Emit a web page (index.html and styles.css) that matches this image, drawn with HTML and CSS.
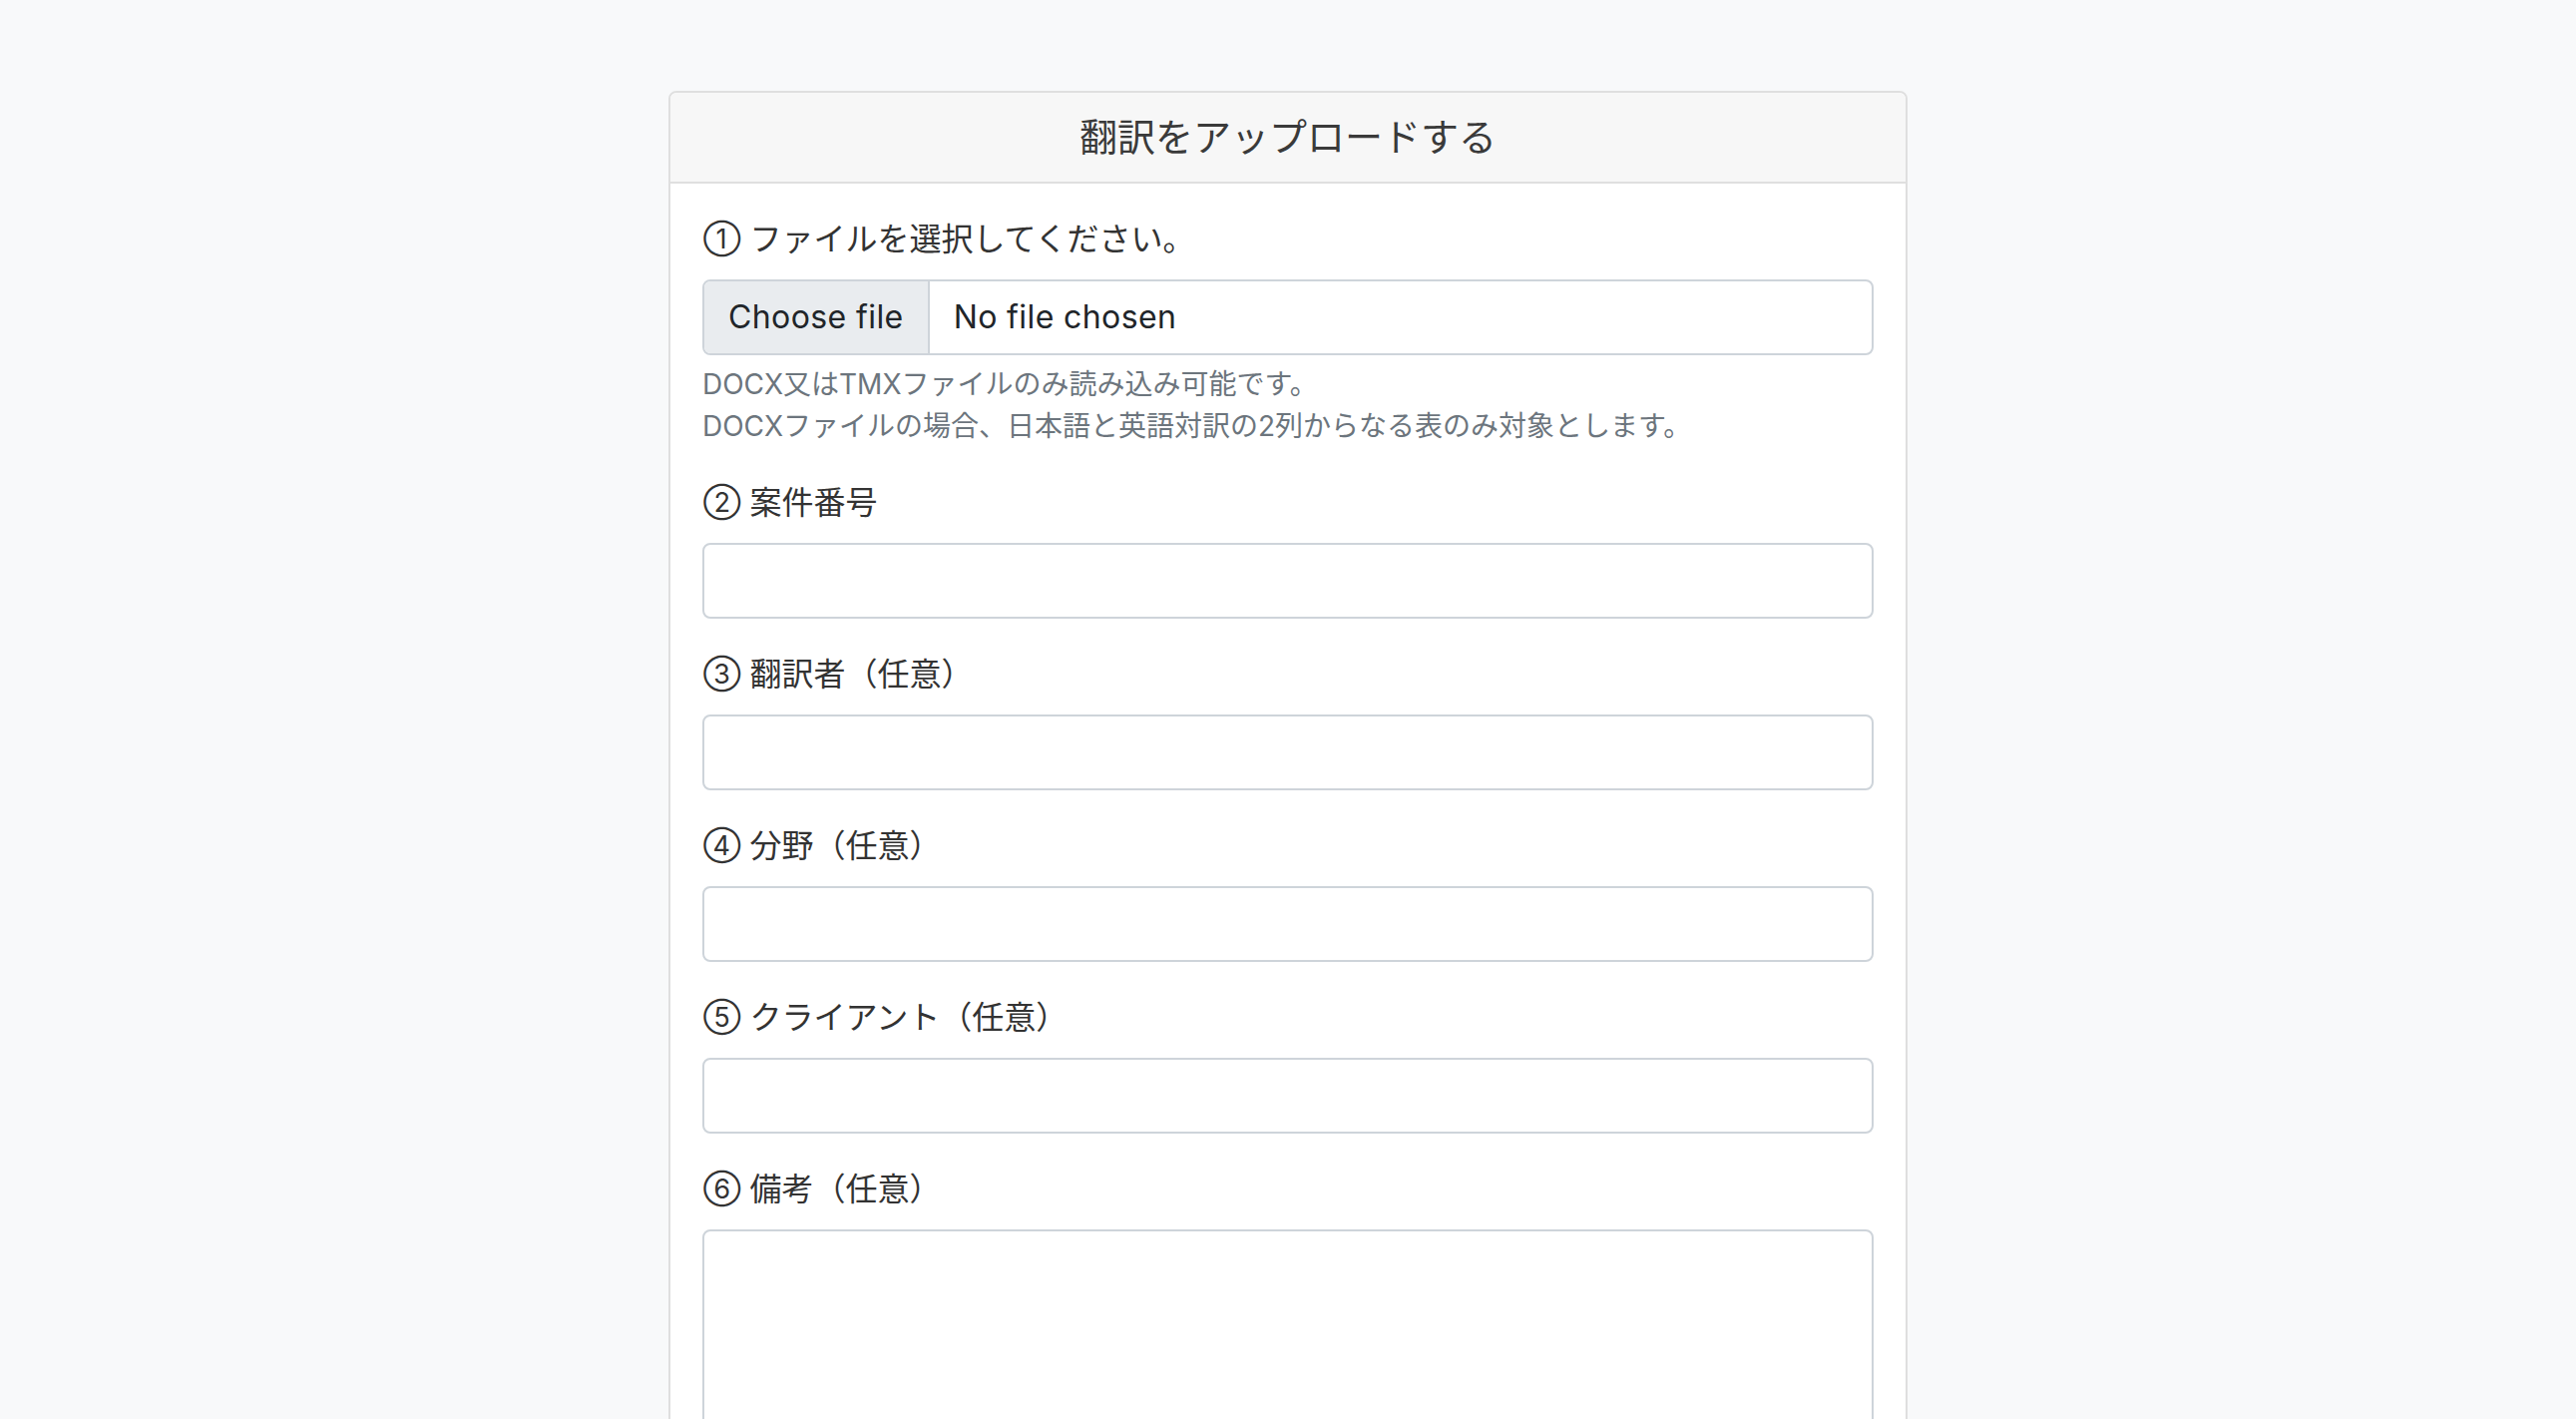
FILE: index.html
```html
<!DOCTYPE html>
<html lang="ja">
<head>
    <meta charset="UTF-8">
    <meta name="viewport" content="width=device-width, initial-scale=1.0">
    <title>翻訳をアップロードする</title>
    <link rel="stylesheet" href="styles.css">
</head>
<body>
<div class="page">
    <div class="card">
        <div class="card-header">翻訳をアップロードする</div>
        <form class="card-body">
            <div class="form-group">
                <label class="form-label" for="upload-file"><span class="step">①</span> ファイルを選択してください。</label>
                <label class="file-input">
                    <span class="file-button">Choose file</span>
                    <span class="file-name">No file chosen</span>
                    <input type="file" id="upload-file" class="file-hidden" accept=".docx,.tmx">
                </label>
                <div class="form-text">DOCX又はTMXファイルのみ読み込み可能です。<br>DOCXファイルの場合、日本語と英語対訳の2列からなる表のみ対象とします。</div>
            </div>
            <div class="form-group">
                <label class="form-label" for="project-no"><span class="step">②</span> 案件番号</label>
                <input type="text" id="project-no" class="form-control">
            </div>
            <div class="form-group">
                <label class="form-label" for="translator"><span class="step">③</span> 翻訳者（任意）</label>
                <input type="text" id="translator" class="form-control">
            </div>
            <div class="form-group">
                <label class="form-label" for="field"><span class="step">④</span> 分野（任意）</label>
                <input type="text" id="field" class="form-control">
            </div>
            <div class="form-group">
                <label class="form-label" for="client"><span class="step">⑤</span> クライアント（任意）</label>
                <input type="text" id="client" class="form-control">
            </div>
            <div class="form-group">
                <label class="form-label" for="note"><span class="step">⑥</span> 備考（任意）</label>
                <textarea id="note" class="form-control note-area"></textarea>
            </div>
        </form>
    </div>
</div>
</body>
</html>
```

FILE: styles.css
```css
html,
body {
    overflow: hidden;
}

body {
    font-family: Inter, "Noto Sans CJK JP", sans-serif;
    background-color: #f8f9fa;
    color: #212529;
    margin: 0;
    padding: 0;
}

.page {
    padding-top: 91px;
}

.card {
    width: 1242px;
    margin: 0 auto;
    background-color: #fff;
    border: 2px solid #dfdfdf;
    border-radius: 8px;
    box-sizing: border-box;
}

.card-header {
    background-color: #f7f7f7;
    border-bottom: 2px solid #dfdfdf;
    border-radius: 6px 6px 0 0;
    padding: 16px 32px;
    font-size: 38px;
    line-height: 57px;
    text-align: center;
    color: #3a3a3a;
}

.card-body {
    padding: 32px;
}

.form-group {
    margin-bottom: 32px;
}

.form-label {
    display: block;
    height: 48px;
    font-size: 32px;
    line-height: 48px;
    margin-bottom: 16px;
    color: #333;
}

.step {
    font-size: 27px;
    line-height: 1;
    vertical-align: 2px;
    margin-left: 1px;
}

.form-control {
    display: block;
    width: 100%;
    box-sizing: border-box;
    padding: 12px 24px;
    font-family: inherit;
    font-size: 32px;
    line-height: 48px;
    color: #212529;
    background-color: #fff;
    border: 2px solid #ced4da;
    border-radius: 8px;
    outline: none;
}

.note-area {
    height: 380px;
    resize: vertical;
}

.file-input {
    display: flex;
    align-items: center;
    height: 76px;
    box-sizing: border-box;
    border: 2px solid #ced4da;
    border-radius: 8px;
    overflow: hidden;
    font-size: 32px;
    line-height: 48px;
    letter-spacing: 0.4px;
    color: #212529;
    cursor: pointer;
}

.file-button {
    align-self: stretch;
    display: flex;
    align-items: center;
    padding: 0 24px;
    background-color: #e9ecef;
    border-right: 2px solid #ced4da;
    margin-right: 24px;
}

.file-hidden {
    display: none;
}

.form-text {
    margin-top: 8px;
    font-size: 28px;
    line-height: 42px;
    color: #6c757d;
}
```
